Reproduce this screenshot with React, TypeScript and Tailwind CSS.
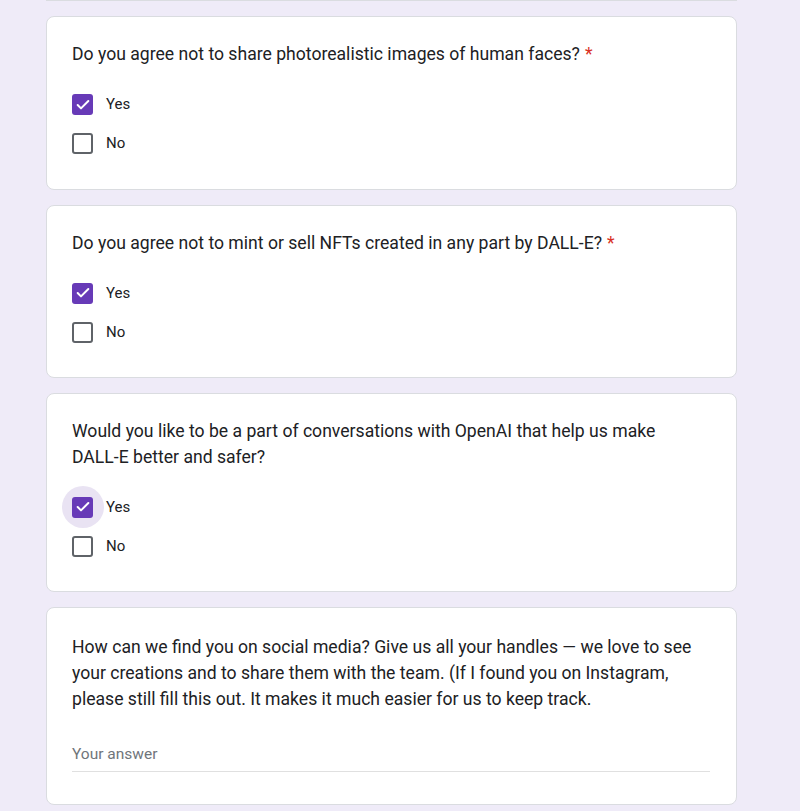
import type { ReactNode } from "react";
import { Check } from "lucide-react";

type Opcion = { label: string; marcado: boolean; foco?: boolean };

function Casilla({ marcado, foco }: { marcado: boolean; foco?: boolean }) {
  return (
    <div className="relative flex h-[21px] w-[21px] shrink-0 items-center justify-center">
      {foco && <div className="absolute left-1/2 top-1/2 h-[42px] w-[42px] -translate-x-1/2 -translate-y-1/2 rounded-full bg-[#e9e3f3]" />}
      {marcado ? (
        <div className="relative flex h-[21px] w-[21px] items-center justify-center rounded-[3px] bg-[#673ab7]">
          <Check size={16} strokeWidth={3} className="text-white" />
        </div>
      ) : (
        <div className="relative h-[21px] w-[21px] rounded-[3px] border-2 border-[#5f6368] bg-white" />
      )}
    </div>
  );
}

function Pregunta({ titulo, requerida, opciones, mb = "mb-[18px]" }: { titulo: ReactNode; requerida?: boolean; opciones: Opcion[]; mb?: string }) {
  return (
    <div className="rounded-lg border border-[#dadce0] bg-white pl-[25px] pr-[26px] pt-[24px] pb-[25.5px]">
      <div className={`${mb} text-[17.6px] leading-[26px] text-[#202124]`}>
        {titulo}
        {requerida && <span className="ml-[5px] text-[#d93025]">*</span>}
      </div>
      {opciones.map((o) => (
        <div key={o.label} className="flex h-[39px] items-center">
          <Casilla marcado={o.marcado} foco={o.foco} />
          <span className="ml-[13px] text-[15px] text-[#202124]">{o.label}</span>
        </div>
      ))}
    </div>
  );
}

export default function App() {
  return (
    <div className="min-h-[811px] w-full bg-[#efebf8] pl-[46px] pr-[63px]" style={{ fontFamily: "Roboto, 'Noto Sans', Arial, sans-serif" }}>
      <div className="flex w-[691px] flex-col gap-[15px]">
        <div className="h-[1px] border-b border-[#dadce0] bg-white" />
        <Pregunta
          titulo="Do you agree not to share photorealistic images of human faces?"
          requerida
          opciones={[{ label: "Yes", marcado: true }, { label: "No", marcado: false }]}
        />
        <Pregunta
          titulo="Do you agree not to mint or sell NFTs created in any part by DALL-E?"
          requerida
          opciones={[{ label: "Yes", marcado: true }, { label: "No", marcado: false }]}
        />
        <Pregunta
          titulo={
            <>
              Would you like to be a part of conversations with OpenAI that help us make <span className="whitespace-nowrap">DALL-E</span> better and safer?
            </>
          }
          mb="mb-[17.5px]"
          opciones={[{ label: "Yes", marcado: true, foco: true }, { label: "No", marcado: false }]}
        />
        <div className="rounded-lg border border-[#dadce0] bg-white pl-[25px] pr-[26px] pt-[26px] pb-[32px]">
          <div className="text-[17.6px] leading-[26px] text-[#202124]">
            How can we find you on social media? Give us all your handles — we love to see your creations and to share them with the team. (If I found you on Instagram, please still fill this out. It makes it much easier for us to keep track.
          </div>
          <div className="mt-[27px] flex h-[33px] items-center border-b border-[#e0e0e0] text-[15.5px] text-[#70757a]">
            Your answer
          </div>
        </div>
      </div>
    </div>
  );
}
